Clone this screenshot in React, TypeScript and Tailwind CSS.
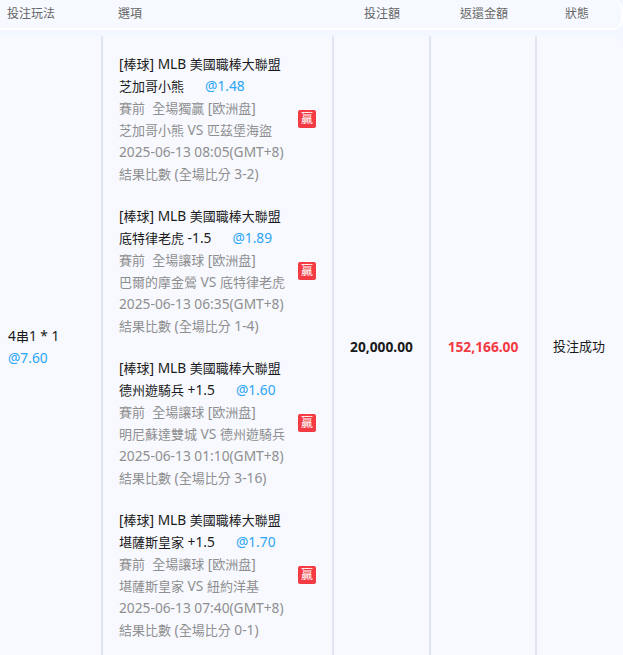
const bets = [
  {
    league: "[棒球] MLB 美國職棒大聯盟",
    pick: "芝加哥小熊",
    odds: "@1.48",
    market: "賽前  全場獨贏 [欧洲盘]",
    teams: "芝加哥小熊 VS 匹茲堡海盜",
    time: "2025-06-13 08:05(GMT+8)",
    result: "結果比數 (全場比分 3-2)",
  },
  {
    league: "[棒球] MLB 美國職棒大聯盟",
    pick: "底特律老虎 -1.5",
    odds: "@1.89",
    market: "賽前  全場讓球 [欧洲盘]",
    teams: "巴爾的摩金鶯 VS 底特律老虎",
    time: "2025-06-13 06:35(GMT+8)",
    result: "結果比數 (全場比分 1-4)",
  },
  {
    league: "[棒球] MLB 美國職棒大聯盟",
    pick: "德州遊騎兵 +1.5",
    odds: "@1.60",
    market: "賽前  全場讓球 [欧洲盘]",
    teams: "明尼蘇達雙城 VS 德州遊騎兵",
    time: "2025-06-13 01:10(GMT+8)",
    result: "結果比數 (全場比分 3-16)",
  },
  {
    league: "[棒球] MLB 美國職棒大聯盟",
    pick: "堪薩斯皇家 +1.5",
    odds: "@1.70",
    market: "賽前  全場讓球 [欧洲盘]",
    teams: "堪薩斯皇家 VS 紐約洋基",
    time: "2025-06-13 07:40(GMT+8)",
    result: "結果比數 (全場比分 0-1)",
  },
];

// CJK runs sit a touch smaller than the latin text around them
function Mixed({ text }: { text: string }) {
  return (
    <>
      {text.split(/([\u4e00-\u9fff]+)/).map((part, i) =>
        i % 2 === 1 ? (
          <span key={i} className="text-[13px]">
            {part}
          </span>
        ) : (
          part
        )
      )}
    </>
  );
}

export default function App() {
  return (
    <div className="h-[655px] w-[623px] overflow-hidden bg-[#f3f7ff] font-['Noto_Sans','Noto_Sans_CJK_TC',sans-serif] text-[13.75px]">
      {/* Header */}
      <div className="flex h-[30px] items-center rounded-br-[10px] rounded-tr-[10px] border-b-2 border-r-2 border-white bg-[#f6f9ff] text-[12px] text-[#666]">
        <div className="w-[118px] pl-[7px]">投注玩法</div>
        <div className="w-[216px]">選項</div>
        <div className="w-[97px] pl-[30px]">投注額</div>
        <div className="w-[106px] pl-[29px]">返還金額</div>
        <div className="flex-1 pl-[28px]">狀態</div>
      </div>

      {/* Row */}
      <div className="mt-[6px] flex h-[622px] rounded-tr-[10px] bg-[#f7f9ff]">
        <div className="flex w-[103px] flex-col justify-center border-r-2 border-[#e0e5f3] pl-[8px] leading-[22px] text-[#1a1a1a]">
          <div>
            <Mixed text="4串1 * 1" />
          </div>
          <div className="text-[#2ba5f5]">@7.60</div>
        </div>

        <div className="flex w-[231px] flex-col gap-[20px] border-r-2 border-[#e0e5f3] pb-[9px] pl-[16px] pr-[16px] pt-[17px] leading-[22px]">
          {bets.map((bet) => (
            <div key={bet.time} className="flex items-center justify-between">
              <div className="whitespace-pre text-[#8f8f8f]">
                <div className="text-[#1a1a1a]">
                  <Mixed text={bet.league} />
                </div>
                <div className="text-[#1a1a1a]">
                  <Mixed text={bet.pick} />
                  <span className="ml-[21px] text-[#2ba5f5]">{bet.odds}</span>
                </div>
                <div>
                  <Mixed text={bet.market} />
                </div>
                <div>
                  <Mixed text={bet.teams} />
                </div>
                <div>{bet.time}</div>
                <div>
                  <Mixed text={bet.result} />
                </div>
              </div>
              <div className="flex h-[18px] w-[18px] shrink-0 items-center justify-center rounded-[2px] bg-[#f43b44] text-[12px] leading-none text-white">
                贏
              </div>
            </div>
          ))}
        </div>

        <div className="flex w-[97px] items-center justify-center border-r-2 border-[#e0e5f3] font-bold text-[#1a1a1a]">
          20,000.00
        </div>
        <div className="flex w-[106px] items-center justify-center border-r-2 border-[#e0e5f3] font-bold text-[#f43b44]">
          152,166.00
        </div>
        <div className="flex flex-1 items-center justify-center pr-[2px] text-[13px] text-[#1a1a1a]">投注成功</div>
      </div>
    </div>
  );
}
